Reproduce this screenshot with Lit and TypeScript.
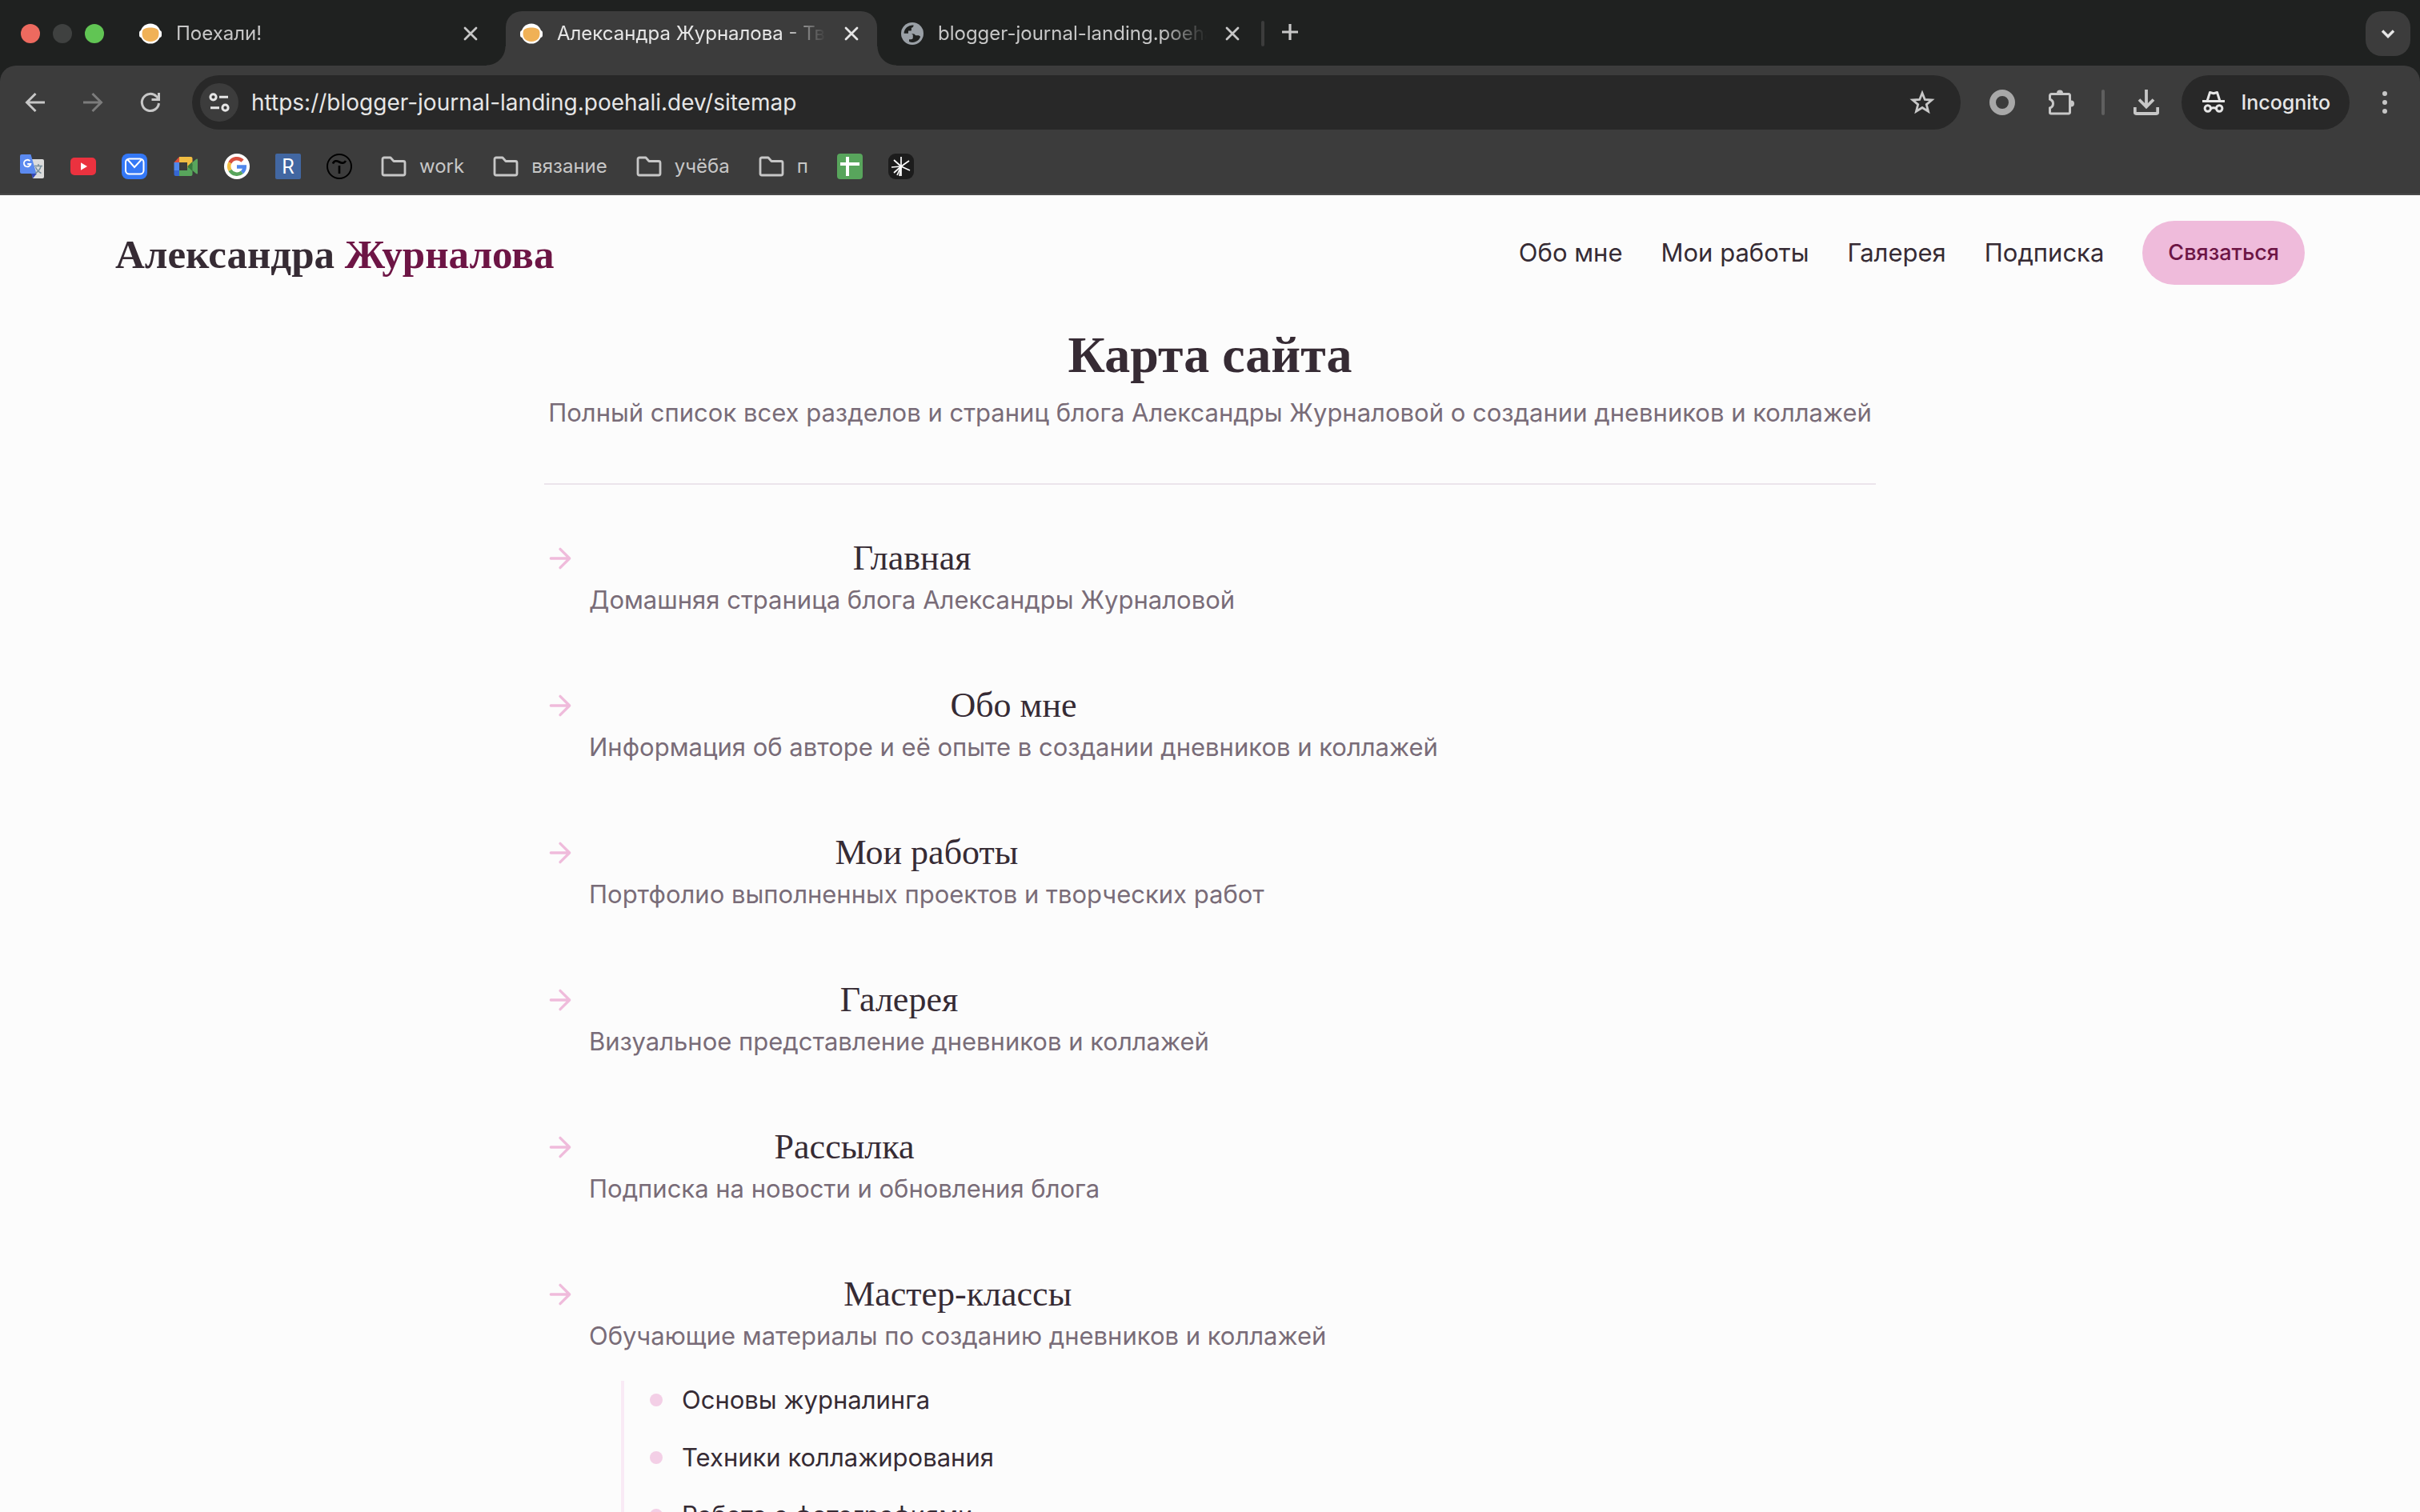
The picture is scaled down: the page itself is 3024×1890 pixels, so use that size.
import { LitElement, html, css, svg, nothing } from "lit";
import { customElement, property } from "lit/decorators.js";
import { classMap } from "lit/directives/class-map.js";

interface SiteSection {
  title: string;
  text: string;
  children?: string[];
}

const SECTIONS: SiteSection[] = [
  { title: "Главная", text: "Домашняя страница блога Александры Журналовой" },
  { title: "Обо мне", text: "Информация об авторе и её опыте в создании дневников и коллажей" },
  { title: "Мои работы", text: "Портфолио выполненных проектов и творческих работ" },
  { title: "Галерея", text: "Визуальное представление дневников и коллажей" },
  { title: "Рассылка", text: "Подписка на новости и обновления блога" },
  {
    title: "Мастер-классы",
    text: "Обучающие материалы по созданию дневников и коллажей",
    children: ["Основы журналинга", "Техники коллажирования", "Работа с фотографиями"],
  },
];

const FOLDERS = ["work", "вязание", "учёба", "п"];

const helmet = html`<svg class="favicon" viewBox="0 0 28 28" aria-hidden="true">
  <circle cx="14" cy="14" r="12.6" fill="#fff" />
  <rect x="0" y="10" width="28" height="9" rx="3" fill="#fff" />
  <path d="M4 10.500C5.500 7.500 9 6.500 14 6.500s8.500 1 10 4c1 3.500.5 7-1.500 10-1.800 2.300-5 3.500-8.500 3.500s-6.700-1.200-8.500-3.500c-2-3-2.500-6.500-1.500-10z" fill="#f0b156" />
</svg>`;

const globe = html`<svg class="favicon" viewBox="0 0 28 28" aria-hidden="true">
  <circle cx="14" cy="14" r="14" fill="#9aa0a6" />
  <path d="M3.600 13.800A10.500 10.500 0 0 1 15.500 3.600c.2 1.700-.8 3-2.600 3.100v2.700c0 .7-.5 1.200-1.200 1.200H9v3.200zM10 24v-2.700h2.300c1.500 0 2.500-1 2.500-2.300v-2.700c0-1.200-1-2.100-2.200-2.100H15c1.400 0 2.400.7 3 2.100h3c1.300 0 2.600.5 3.100 1.600A10.600 10.600 0 0 1 10 24z" fill="#1f2120" />
</svg>`;

const folder = html`<svg class="folder-icon" viewBox="0 0 32 32" aria-hidden="true">
  <path d="M2 7a2 2 0 0 1 2-2h8l4 4.500h12a2 2 0 0 1 2 2V25a2 2 0 0 1-2 2H4a2 2 0 0 1-2-2z" fill="none" stroke="#c7c7c7" stroke-width="2.800" stroke-linejoin="round" />
</svg>`;

const arrow = html`<svg class="arrow" viewBox="0 0 24 24" aria-hidden="true">
  <path d="M5 12h14M12 5l7 7-7 7" fill="none" stroke="#efbbdb" stroke-width="2" stroke-linecap="round" stroke-linejoin="round" />
</svg>`;

// End points of the uneven rays in the star bookmark.
const RAYS = [
  [16, 4], [7, 8], [26, 9], [4, 17], [27, 21], [7, 24], [11, 27], [14, 28], [16, 28],
];

@customElement("browser-tab")
export class BrowserTab extends LitElement {
  @property() label = "";
  @property() icon = "helmet";
  @property({ type: Boolean }) active = false;

  static styles = css`
    :host { display: block; flex: 0 1 464px; min-width: 0; }
    .tab {
      position: relative;
      display: flex;
      align-items: center;
      height: 56px;
      padding: 0 16px 12px 18px;
      color: #c7c7c7;
      border-radius: 20px 20px 0 0;
    }
    .tab.active { background: #3c3c3c; color: #e6e6e6; }
    .tab.active::before,
    .tab.active::after {
      content: "";
      position: absolute;
      bottom: 0;
      width: 24px;
      height: 24px;
    }
    .tab.active::before { right: 100%; background: radial-gradient(circle at 0 0, transparent 23px, #3c3c3c 24px); }
    .tab.active::after { left: 100%; background: radial-gradient(circle at 100% 0, transparent 23px, #3c3c3c 24px); }
    button { font: inherit; color: inherit; background: none; border: 0; padding: 0; margin: 0; }
    .title {
      flex: 1;
      min-width: 0;
      display: flex;
      align-items: center;
      gap: 18px;
      margin-right: 16px;
      text-align: left;
    }
    .favicon { flex: none; width: 28px; height: 28px; }
    .text {
      flex: 1;
      overflow: hidden;
      white-space: nowrap;
      font-size: 24px;
      line-height: 32px;
      mask-image: linear-gradient(to right, #000 calc(100% - 56px), transparent);
    }
    .close { display: flex; width: 32px; height: 32px; }
    .close svg { width: 32px; height: 32px; }
  `;

  render() {
    return html`<div class=${classMap({ tab: true, active: this.active })}>
      <button class="title" role="tab" aria-selected=${this.active ? "true" : "false"}>
        ${this.icon === "globe" ? globe : helmet}
        <span class="text">${this.label}</span>
      </button>
      <button class="close" aria-label="Закрыть вкладку">
        <svg viewBox="0 0 32 32" aria-hidden="true"><path d="M9 9l14 14M23 9L9 23" stroke="currentColor" stroke-width="2.800" stroke-linecap="round" /></svg>
      </button>
    </div>`;
  }
}

@customElement("browser-frame")
export class BrowserFrame extends LitElement {
  static styles = css`
    :host { display: block; flex: none; background: #1f2120; }
    button { font: inherit; color: inherit; background: none; border: 0; padding: 0; margin: 0; }
    svg { display: block; flex: none; }
    .i32 { width: 32px; height: 32px; }

    .tabstrip { display: flex; align-items: flex-start; height: 68px; padding: 14px 12px 0 26px; }
    .lights { display: flex; gap: 16px; height: 56px; align-items: center; margin-right: 26px; }
    .light { width: 24px; height: 24px; border-radius: 50%; background: #3f4140; }
    .light.close { background: #ed6a5f; }
    .light.zoom { background: #61c554; }
    .tabs { flex: 0 1 1416px; display: flex; gap: 12px; min-width: 0; }
    .tabs browser-tab { padding-bottom: 12px; }
    .split { flex: none; width: 4px; height: 32px; border-radius: 2px; background: #3c3c3c; margin: 12px 16px 0 4px; }
    .plus { margin: 10px auto 0 0; }
    .search { display: flex; align-items: center; justify-content: center; width: 56px; height: 56px; border-radius: 20px; background: #3c3c3c; }

    .panel { background: #3c3c3c; border-radius: 20px 20px 0 0; border-bottom: 2px solid #4a4a4a; }
    .toolbar { display: flex; align-items: center; height: 92px; padding: 0 28px 0 16px; }
    .nav { display: flex; gap: 16px; margin-right: 24px; }
    .nav button { display: flex; align-items: center; justify-content: center; width: 56px; height: 56px; }
    .address { flex: 1; display: flex; align-items: center; min-width: 0; height: 68px; padding: 0 32px 0 10px; box-sizing: border-box; border-radius: 34px; background: #282828; }
    .site { display: flex; align-items: center; justify-content: center; width: 48px; height: 48px; border-radius: 50%; background: #3c3c3c; margin-right: 16px; }
    input { flex: 1; min-width: 0; font: inherit; font-size: 28px; line-height: 40px; color: #e6e6e6; background: none; border: 0; padding: 0; margin: 0; outline: 0; }
    .extensions { display: flex; align-items: center; gap: 42px; margin: 0 34px 0 36px; }
    .rule { width: 4px; height: 32px; border-radius: 2px; background: #5f5f5f; margin-right: 36px; }
    .incognito { display: flex; align-items: center; gap: 18px; height: 68px; padding: 0 24px; margin: 0 28px; border-radius: 34px; background: #282828; color: #e6e6e6; font-size: 25px; font-weight: 500; }

    .bookmarks { display: flex; align-items: center; gap: 32px; height: 68px; padding: 0 24px; font-size: 24px; line-height: 32px; }
    .bookmarks a { display: block; color: #c7c7c7; text-decoration: none; }
    .folders { display: flex; gap: 36px; margin: 0 4px; }
    .folders .folder { display: flex; align-items: center; gap: 16px; }
    .folder-icon { width: 32px; height: 32px; }
    .letter { font-family: Roboto, sans-serif; font-size: 25px; fill: #fff; text-anchor: middle; }
  `;

  render() {
    return html`
      <div class="tabstrip">
        <div class="lights">
          <span class="light close"></span><span class="light"></span><span class="light zoom"></span>
        </div>
        <div class="tabs" role="tablist">
          <browser-tab label="Поехали!"></browser-tab>
          <browser-tab label="Александра Журналова - Творчество" active></browser-tab>
          <browser-tab label="blogger-journal-landing.poehali.dev" icon="globe"></browser-tab>
        </div>
        <span class="split"></span>
        <button class="plus" aria-label="Новая вкладка">
          <svg class="i32" viewBox="0 0 32 32" aria-hidden="true"><path d="M16 6v20M6 16h20" stroke="#c7c7c7" stroke-width="3.200" /></svg>
        </button>
        <button class="search" aria-label="Поиск вкладок">
          <svg class="i32" viewBox="0 0 32 32" aria-hidden="true"><path d="M9 12.500l7 7 7-7" fill="none" stroke="#e6e6e6" stroke-width="3.400" /></svg>
        </button>
      </div>
      <div class="panel">
        <div class="toolbar">
          <div class="nav">
            <button aria-label="Назад">
              <svg class="i32" viewBox="0 0 32 32" aria-hidden="true"><path d="M28 16H6M16.500 5L5.500 16l11 11" fill="none" stroke="#c7c7c7" stroke-width="3" /></svg>
            </button>
            <button aria-label="Вперёд" disabled>
              <svg class="i32" viewBox="0 0 32 32" aria-hidden="true"><path d="M4 16h22M15.500 5l11 11-11 11" fill="none" stroke="#7c7c7c" stroke-width="3" /></svg>
            </button>
            <button aria-label="Обновить">
              <svg class="i32" viewBox="0 0 32 32" aria-hidden="true"><path d="M26.500 17A10.600 10.600 0 1 1 23.500 8.500l3 3M26.500 4v8.500h-9" fill="none" stroke="#c7c7c7" stroke-width="3" /></svg>
            </button>
          </div>
          <div class="address">
            <button class="site" aria-label="Сведения о сайте">
              <svg class="i32" viewBox="0 0 32 32" aria-hidden="true"><g fill="none" stroke="#e6e6e6" stroke-width="3"><circle cx="8.500" cy="9.300" r="3.600" /><path d="M16 9.300h11M5 22.700h11" /><circle cx="23.500" cy="22.700" r="3.600" /></g></svg>
            </button>
            <input type="text" aria-label="Адрес страницы" .value=${"https://blogger-journal-landing.poehali.dev/sitemap"} />
            <button aria-label="Добавить в закладки">
              <svg class="i32" viewBox="0 0 32 32" aria-hidden="true"><path d="M16 4.200l3.300 8.200 8.700.6-6.700 5.600 2.200 8.600L16 22.500l-7.500 4.700 2.200-8.600L4 13l8.700-.6z" fill="none" stroke="#c7c7c7" stroke-width="2.800" /></svg>
            </button>
          </div>
          <div class="extensions">
            <button aria-label="Расширение">
              <svg class="i32" viewBox="0 0 32 32" aria-hidden="true"><circle cx="16" cy="16" r="12" fill="none" stroke="#a8a8a8" stroke-width="8" /></svg>
            </button>
            <button aria-label="Расширения">
              <svg class="i32" viewBox="0 0 32 32" aria-hidden="true">
                <path d="M3.500 5.500h21.500a1.500 1.500 0 0 1 1.500 1.500v21.500a1.500 1.500 0 0 1-1.500 1.500H3a1.500 1.500 0 0 1-1.500-1.500v-5.500c2.500-1 4-3 4-5.500s-1.500-4.500-4-5.500V7.500a2 2 0 0 1 2-2z" fill="none" stroke="#c7c7c7" stroke-width="3" />
                <path d="M10 4.500a4 4 0 0 1 8 0zM28 13.500a4 4 0 0 1 0 8z" fill="#c7c7c7" />
              </svg>
            </button>
          </div>
          <span class="rule"></span>
          <button aria-label="Загрузки">
            <svg class="i32" viewBox="0 0 32 32" aria-hidden="true"><path d="M16 0v21M7 12.500l9 9 9-9M1.800 22v6a2 2 0 0 0 2 2h24.400a2 2 0 0 0 2-2v-6" fill="none" stroke="#c7c7c7" stroke-width="3.800" /></svg>
          </button>
          <button class="incognito">
            <svg class="i32" viewBox="0 0 32 32" aria-hidden="true">
              <g fill="none" stroke="#e6e6e6" stroke-width="3">
                <path d="M2 14.500h28" />
                <path d="M8 14.500L11.500 3.500l4.500 1.200L20.500 3.500l3.500 11" stroke-linejoin="round" />
                <circle cx="8.800" cy="23.500" r="3.700" /><circle cx="23.200" cy="23.500" r="3.700" />
                <path d="M12.500 23.500q3.500-1.500 7 0" />
              </g>
            </svg>
            Incognito
          </button>
          <button aria-label="Меню">
            <svg class="i32" viewBox="0 0 32 32" aria-hidden="true"><g fill="#c7c7c7"><circle cx="16" cy="5" r="3" /><circle cx="16" cy="16" r="3" /><circle cx="16" cy="27" r="3" /></g></svg>
          </button>
        </div>
        <nav class="bookmarks" aria-label="Закладки">
          <a href="#" aria-label="Переводчик">
            <svg class="i32" viewBox="0 0 32 32" aria-hidden="true">
              <path d="M12 7h17a2 2 0 0 1 2 2v20a2 2 0 0 1-2 2H17z" fill="#dcdcdc" />
              <path d="M15 25h7l-5 6z" fill="#3347b5" />
              <path d="M3 1h11.500l7 24H3a2 2 0 0 1-2-2V3a2 2 0 0 1 2-2z" fill="#5b8af0" />
              <path d="M13.400 9.200a4.300 4.300 0 1 0 1 3.800h-4.200" fill="none" stroke="#fff" stroke-width="1.800" />
              <path d="M19 15.500h10M24 13v2.500M27 16c-1 4-4 7-7 8.500M20.500 17c1.500 3.500 4 6 7 7.500" fill="none" stroke="#78909c" stroke-width="1.500" />
            </svg>
          </a>
          <a href="#" aria-label="YouTube">
            <svg class="i32" viewBox="0 0 32 32" aria-hidden="true"><rect y="5" width="32" height="22" rx="5" fill="#eb323f" /><path d="M13 11.300v9.400l8-4.700z" fill="#fff" /></svg>
          </a>
          <a href="#" aria-label="Почта">
            <svg class="i32" viewBox="0 0 32 32" aria-hidden="true"><rect width="32" height="32" rx="8" fill="#3478f6" /><rect x="5" y="6.500" width="22.500" height="19" rx="4.500" fill="none" stroke="#fff" stroke-width="2" /><path d="M7.500 7.500L16 17l8.800-9.500" fill="none" stroke="#fff" stroke-width="2" /></svg>
          </a>
          <a href="#" aria-label="Meet">
            <svg class="i32" viewBox="0 0 32 32" aria-hidden="true">
              <path d="M8 4v7H1.500z" fill="#d8503f" />
              <path d="M1.500 11H8v10H1.500z" fill="#5087ec" />
              <path d="M1.500 21H8v7H3.500a2 2 0 0 1-2-2z" fill="#3567d4" />
              <path d="M8 4h14.500a2 2 0 0 1 2 2v7L18 18v-7H8z" fill="#f1bd42" />
              <path d="M8 28v-7h10v-3l6.500-3v11a2 2 0 0 1-2 2z" fill="#58a55c" />
              <path d="M18 16l6.500-6v12z" fill="#387a3e" />
              <path d="M24.500 11l4.500-4q2-1 2 .5v17q0 1.500-2 .5l-4.500-4z" fill="#58a55c" />
            </svg>
          </a>
          <a href="#" aria-label="Google">
            <svg class="i32" viewBox="0 0 32 32" aria-hidden="true">
              <circle cx="16" cy="16" r="16" fill="#fff" />
              <g fill="none" stroke-width="4.600">
                <path d="M7.300 11.500A9.800 9.800 0 0 1 23 9.200" stroke="#d8503f" />
                <path d="M7.500 20.800a9.800 9.800 0 0 1-.2-9.300" stroke="#f1bd42" />
                <path d="M22.500 23.200a9.800 9.800 0 0 1-15-2.400" stroke="#58a55c" />
                <path d="M16 16.500h9.700c0 2.800-1.200 5.200-3.200 6.900" stroke="#5087ec" />
              </g>
            </svg>
          </a>
          <a href="#" aria-label="R">
            <svg class="i32" viewBox="0 0 32 32" aria-hidden="true"><rect width="32" height="32" rx="2" fill="#4267a2" /><text class="letter" x="16" y="25">R</text></svg>
          </a>
          <a href="#" aria-label="Tilda">
            <svg class="i32" viewBox="0 0 32 32" aria-hidden="true"><g fill="none" stroke="#000"><circle cx="16" cy="16" r="15" stroke-width="2" /><path d="M8 12.500c1.500-4 4.500-4 8-2s6.500 1.500 8-1.500M16 15v10" stroke-width="2.600" /></g></svg>
          </a>
          <div class="folders">${FOLDERS.map((name) => html`<a class="folder" href="#">${folder}<span>${name}</span></a>`)}</div>
          <a href="#" aria-label="Таблица">
            <svg class="i32" viewBox="0 0 32 32" aria-hidden="true"><rect width="32" height="32" rx="4" fill="#58a55c" /><path d="M13 4v24M4 13h24" stroke="#fff" stroke-width="4" /></svg>
          </a>
          <a href="#" aria-label="Звезда">
            <svg class="i32" viewBox="0 0 32 32" aria-hidden="true">
              <rect width="32" height="32" rx="9" fill="#1c1c1c" />
              ${RAYS.map(([x, y]) => svg`<path d="M16 16L${x} ${y}" stroke="#fff" stroke-width="1.700" />`)}
            </svg>
          </a>
        </nav>
      </div>
    `;
  }
}

@customElement("site-header")
export class SiteHeader extends LitElement {
  static styles = css`
    :host { display: block; }
    header { display: flex; align-items: center; justify-content: space-between; padding: 32px 144px; }
    a { color: inherit; text-decoration: none; }
    .logo { padding-top: 4px; font-family: "Liberation Serif", serif; font-size: 51px; line-height: 64px; font-weight: 700; color: #362b34; }
    .accent { color: #6d1545; }
    nav { display: flex; align-items: center; gap: 48px; font-size: 31px; line-height: 48px; color: #362b34; }
    button { height: 80px; padding: 0 32px; border: 0; border-radius: 40px; background: #efbbdb; color: #6d1545; font: inherit; font-size: 27px; line-height: 40px; font-weight: 500; }
  `;

  render() {
    return html`<header>
      <a class="logo" href="#">Александра <span class="accent">Журналова</span></a>
      <nav>
        <a href="#">Обо мне</a>
        <a href="#">Мои работы</a>
        <a href="#">Галерея</a>
        <a href="#">Подписка</a>
        <button>Связаться</button>
      </nav>
    </header>`;
  }
}

@customElement("site-map")
export class SiteMap extends LitElement {
  static styles = css`
    :host { display: block; max-width: 1664px; margin: 0 auto; padding: 16px 64px 128px; }
    h1, h2, p, ul { margin: 0; padding: 0; }
    ul { list-style: none; }
    a { color: inherit; text-decoration: none; }
    h1, h2 { font-family: "Liberation Serif", serif; color: #362b34; text-align: center; }
    h1 { font-size: 64px; line-height: 80px; font-weight: 700; margin-bottom: 8px; }
    p { font-size: 31px; line-height: 48px; color: #796c78; }
    .intro { padding-bottom: 64px; border-bottom: 2px solid #ebe4eb; text-align: center; }
    .sections { display: flex; flex-direction: column; gap: 80px; padding-top: 64px; }
    .section { display: flex; align-items: flex-start; gap: 16px; }
    .arrow { flex: none; width: 40px; height: 40px; margin-top: 8px; }
    h2 { font-size: 44px; line-height: 56px; font-weight: 400; }
    .children { display: flex; flex-direction: column; gap: 24px; margin: 32px 0 0 40px; padding-left: 32px; border-left: 4px solid #f9eaf5; font-size: 31px; line-height: 48px; color: #362b34; }
    .children li { display: flex; align-items: center; gap: 24px; }
    .dot { width: 16px; height: 16px; border-radius: 50%; background: #f3cfe6; }
  `;

  render() {
    return html`
      <div class="intro">
        <h1>Карта сайта</h1>
        <p>Полный список всех разделов и страниц блога Александры Журналовой о создании дневников и коллажей</p>
      </div>
      <ul class="sections">
        ${SECTIONS.map(
          (s) => html`<li class="section">
            ${arrow}
            <div>
              <h2><a href="#">${s.title}</a></h2>
              <p>${s.text}</p>
              ${s.children
                ? html`<ul class="children">
                    ${s.children.map((c) => html`<li><span class="dot"></span><a href="#">${c}</a></li>`)}
                  </ul>`
                : nothing}
            </div>
          </li>`
        )}
      </ul>
    `;
  }
}

@customElement("app-root")
export class AppRoot extends LitElement {
  static styles = css`
    :host {
      display: flex;
      flex-direction: column;
      height: 100vh;
      overflow: hidden;
      background: #fcfcfc;
      font-family: Inter, "Open Sans", sans-serif;
    }
    .page { flex: 1; min-height: 0; overflow: hidden; }
  `;

  render() {
    return html`
      <browser-frame></browser-frame>
      <div class="page">
        <site-header></site-header>
        <main><site-map></site-map></main>
      </div>
    `;
  }
}
